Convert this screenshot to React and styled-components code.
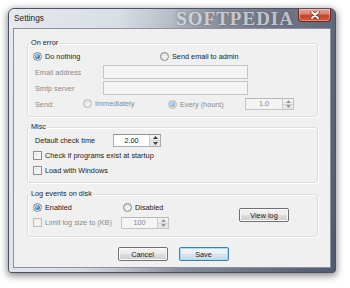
import React from 'react';
import styled, { createGlobalStyle } from 'styled-components';

const GlobalStyle = createGlobalStyle`
  html, body { margin: 0; padding: 0; background: #fff; }
  body {
    font-family: "Liberation Sans", Arial, sans-serif;
    font-size: 7.3px;
    color: #222;
  }
`;

const Page = styled.div`
  width: 350px;
  height: 288px;
  box-sizing: border-box;
  padding: 8px 0 0 8px;
`;

// aero glass frame, light on the left, dark blue-grey on the right
const Window = styled.div`
  width: 328px;
  height: 265px;
  box-sizing: border-box;
  display: flex;
  flex-direction: column;
  padding: 0 4px 4px 4px;
  border: 1px solid #4a5366;
  border-radius: 6px 6px 3px 3px;
  background: linear-gradient(100deg, #e6e9ee 0%, #d9dee5 30%, #b4bac4 45%, #878e9b 58%, #6f7686 75%, #5b6579 90%, #4f5a72 100%);
  box-shadow: 0 2px 7px 1px rgba(0, 0, 0, 0.45);
`;

const TitleBar = styled.div`
  height: 19px;
  display: flex;
  align-items: flex-start;
`;

const Title = styled.span`
  font-size: 8.3px;
  line-height: 19px;
  padding-left: 1px;
  color: #222;
`;

const Watermark = styled.span`
  margin-left: auto;
  font-family: "Liberation Serif", "Times New Roman", serif;
  font-weight: bold;
  font-size: 19px;
  line-height: 19px;
  letter-spacing: 1px;
  color: rgba(255, 255, 255, 0.6);
  text-shadow: 0 0 4px rgba(60, 60, 70, 0.5);
`;

const CloseButton = styled.div`
  margin-left: 4px;
  width: 33px;
  height: 13px;
  box-sizing: border-box;
  display: flex;
  align-items: center;
  justify-content: center;
  border: 1px solid #6e2a22;
  border-top: none;
  border-radius: 0 0 4px 4px;
  background: linear-gradient(#e9a796 0%, #d9826f 40%, #c4432c 55%, #cf5a40 100%);
  box-shadow: inset 0 0 0 1px rgba(255, 210, 200, 0.45);
`;

const Client = styled.div`
  flex: 1;
  display: flex;
  flex-direction: column;
  box-sizing: border-box;
  padding: 9px 12px 0 13px;
  background: #f0f0f0;
  border: 1px solid #89919e;
`;

const Group = styled.fieldset`
  margin: ${p => p.$top || 0}px 0 0;
  padding: ${p => p.$pt || 0}px 5px ${p => p.$pb || 4}px 5px;
  border: 1px solid #d5dfe5;
  border-radius: 3px;
  box-shadow: inset 1px 1px 0 #fff, 1px 1px 0 #fff;
  min-width: 0;
`;

const Legend = styled.legend`
  margin-left: -3px;
  padding: 0 1px;
  line-height: 10px;
  color: #222;
`;

const Row = styled.div`
  display: flex;
  align-items: center;
  height: ${p => p.$h || 16}px;
`;

const Cell = styled.div`
  flex: none;
  width: ${p => p.$w}px;
  box-sizing: border-box;
  padding-left: ${p => p.$pl || 0}px;
  color: ${p => (p.$disabled ? '#8a8a8a' : '#222')};
`;

const Option = styled.span`
  display: inline-flex;
  align-items: center;
  gap: 3px;
  color: ${p => (p.$disabled ? '#8a8a8a' : '#222')};
`;

const Circle = styled.span`
  width: 9px;
  height: 9px;
  box-sizing: border-box;
  border-radius: 50%;
  border: 1px solid ${p => (p.$disabled ? '#b8b8b8' : '#8a8a8a')};
  background: radial-gradient(circle at 60% 65%, #f8f8f8 0%, #e2e2e2 60%, #cfcfcf 100%);
  display: flex;
  align-items: center;
  justify-content: center;
  &::after {
    content: '';
    display: ${p => (p.$checked ? 'block' : 'none')};
    width: 5px;
    height: 5px;
    border-radius: 50%;
    background: radial-gradient(circle at 35% 35%, #9fd3f7 0%, #3a86c8 55%, #1d5a96 100%);
    opacity: ${p => (p.$disabled ? 0.55 : 1)};
  }
`;

const Box = styled.span`
  width: 9px;
  height: 9px;
  box-sizing: border-box;
  border: 1px solid ${p => (p.$disabled ? '#bdbdbd' : '#8e8f8f')};
  background: ${p => (p.$disabled ? '#f4f4f4' : 'linear-gradient(135deg, #dcdcdc 0%, #f4f4f4 60%, #ffffff 100%)')};
  box-shadow: inset 0 0 0 1px ${p => (p.$disabled ? '#f0f0f0' : '#f4f4f4')};
`;

const TextBox = styled.div`
  width: 145px;
  height: 14px;
  box-sizing: border-box;
  border: 1px solid #c4c7ca;
  background: #f4f4f4;
`;

const Spin = styled.div`
  display: flex;
  width: ${p => p.$w || 49}px;
  height: ${p => p.$h || 12}px;
  box-sizing: border-box;
  border: 1px solid ${p => (p.$disabled ? '#c2c4c6' : '#a9adb2')};
  border-top-color: ${p => (p.$disabled ? '#b5b7b9' : '#8c9096')};
  background: ${p => (p.$disabled ? '#f4f4f4' : '#fff')};
`;

const SpinValue = styled.div`
  flex: 1;
  text-align: center;
  line-height: ${p => p.$lh}px;
  color: ${p => (p.$disabled ? '#8a8a8a' : '#111')};
`;

const SpinArrows = styled.div`
  width: 10px;
  display: flex;
  flex-direction: column;
  border-left: 1px solid #c9cbcd;
  background: linear-gradient(#f4f4f4, #e4e4e4);
`;

const SpinHalf = styled.div`
  flex: 1;
  display: flex;
  align-items: center;
  justify-content: center;
  & + & { border-top: 1px solid #cfd1d3; }
`;

const Button = styled.div`
  width: 50px;
  height: 14px;
  box-sizing: border-box;
  display: flex;
  align-items: center;
  justify-content: center;
  color: #222;
  border-radius: 2px;
  border: 1px solid ${p => (p.$primary ? '#3c7fb1' : '#707070')};
  background: ${p =>
    p.$primary
      ? 'linear-gradient(#f2f7fb 0%, #e6eef5 50%, #d7e4ee 51%, #cbdae6 100%)'
      : 'linear-gradient(#f3f3f3 0%, #ebebeb 50%, #dddddd 51%, #cfcfcf 100%)'};
  box-shadow: inset 0 0 0 1px ${p => (p.$primary ? '#a8dcf6' : '#fbfbfb')};
`;

const ButtonRow = styled.div`
  display: flex;
  justify-content: center;
  gap: 11px;
  margin-top: 10px;
  padding-left: 1px;
`;

const LogBody = styled.div`
  display: flex;
  align-items: center;
`;

const ViewLog = styled(Button)`
  margin-left: auto;
  margin-right: 23px;
`;

const Arrow = ({ up, disabled }) => (
  <svg width="5" height="3" viewBox="0 0 5 3">
    <path d={up ? 'M0 3 L2.5 0 L5 3 Z' : 'M0 0 L5 0 L2.5 3 Z'} fill={disabled ? '#9a9a9a' : '#3a3a3a'} />
  </svg>
);

const SpinBox = ({ value, w, h, disabled }) => (
  <Spin $w={w} $h={h} $disabled={disabled}>
    <SpinValue $lh={h - 2} $disabled={disabled}>{value}</SpinValue>
    <SpinArrows>
      <SpinHalf><Arrow up disabled={disabled} /></SpinHalf>
      <SpinHalf><Arrow disabled={disabled} /></SpinHalf>
    </SpinArrows>
  </Spin>
);

const Radio = ({ checked, disabled, children }) => (
  <Option $disabled={disabled}>
    <Circle $checked={checked} $disabled={disabled} />
    {children}
  </Option>
);

const Check = ({ disabled, children }) => (
  <Option $disabled={disabled}>
    <Box $disabled={disabled} />
    {children}
  </Option>
);

export default function App() {
  return (
    <Page>
      <GlobalStyle />
      <Window>
        <TitleBar>
          <Title>Settings</Title>
          <Watermark>SOFTPEDIA</Watermark>
          <CloseButton>
            <svg width="10" height="8" viewBox="0 0 10 8">
              <path d="M2 1 L8 7 M8 1 L2 7" stroke="#5a1c14" strokeWidth="3" strokeLinecap="round" />
              <path d="M2 1 L8 7 M8 1 L2 7" stroke="#fff" strokeWidth="1.8" strokeLinecap="round" />
            </svg>
          </CloseButton>
        </TitleBar>

        <Client>
          <Group $pb={4}>
            <Legend>On error</Legend>
            <Row>
              <Cell $w={127}><Radio checked>Do nothing</Radio></Cell>
              <Radio>Send email to admin</Radio>
            </Row>
            <Row>
              <Cell $w={70} $pl={2} $disabled>Email address</Cell>
              <TextBox />
            </Row>
            <Row>
              <Cell $w={70} $pl={2} $disabled>Smtp server</Cell>
              <TextBox />
            </Row>
            <Row>
              <Cell $w={50} $pl={2} $disabled>Send:</Cell>
              <Cell $w={85}><Radio disabled>Immediately</Radio></Cell>
              <Cell $w={77}><Radio checked disabled>Every (hours)</Radio></Cell>
              <SpinBox value="1.0" w={49} h={12} disabled />
            </Row>
          </Group>

          <Group $top={5} $pt={1} $pb={4}>
            <Legend>Misc</Legend>
            <Row $h={15}>
              <Cell $w={80} $pl={2}>Default check time</Cell>
              <SpinBox value="2.00" w={48} h={13} />
            </Row>
            <Row $h={15}>
              <Check>Check if programs exist at startup</Check>
            </Row>
            <Row $h={15}>
              <Check>Load with Windows</Check>
            </Row>
          </Group>

          <Group $top={6} $pb={5}>
            <Legend>Log events on disk</Legend>
            <LogBody>
              <div>
                <Row>
                  <Cell $w={90}><Radio checked>Enabled</Radio></Cell>
                  <Radio>Disabled</Radio>
                </Row>
                <Row>
                  <Cell $w={88}><Check disabled>Limit log size to (KB)</Check></Cell>
                  <SpinBox value="100" w={48} h={12} disabled />
                </Row>
              </div>
              <ViewLog>View log</ViewLog>
            </LogBody>
          </Group>

          <ButtonRow>
            <Button>Cancel</Button>
            <Button $primary>Save</Button>
          </ButtonRow>
        </Client>
      </Window>
    </Page>
  );
}
